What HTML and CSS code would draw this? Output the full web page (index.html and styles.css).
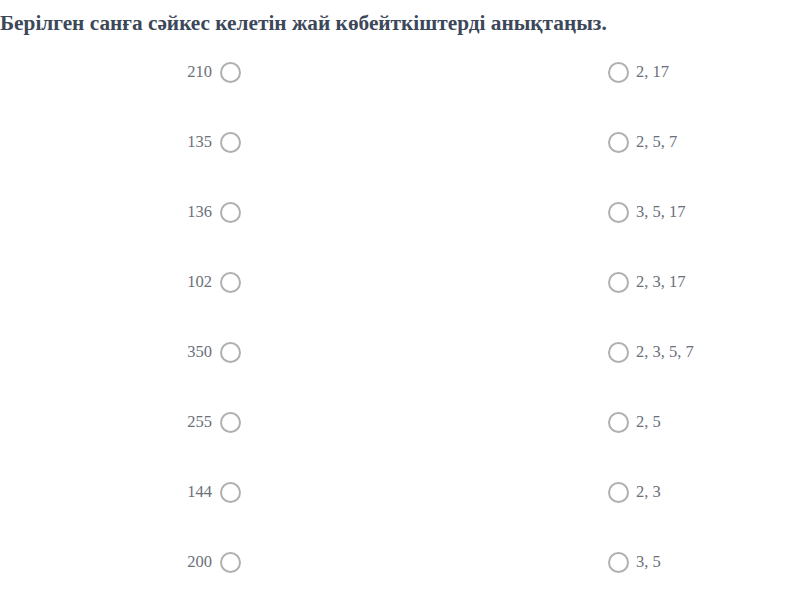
FILE: index.html
```html
<!DOCTYPE html>
<html lang="kk">
<head>
<meta charset="utf-8">
<link rel="stylesheet" href="styles.css">
</head>
<body>
<h1 class="title">Берілген санға сәйкес келетін жай көбейткіштерді анықтаңыз.</h1>
<div class="match">
  <div class="col col-left">
    <label class="item"><span class="txt">210</span><span class="radio"></span></label>
    <label class="item"><span class="txt">135</span><span class="radio"></span></label>
    <label class="item"><span class="txt">136</span><span class="radio"></span></label>
    <label class="item"><span class="txt">102</span><span class="radio"></span></label>
    <label class="item"><span class="txt">350</span><span class="radio"></span></label>
    <label class="item"><span class="txt">255</span><span class="radio"></span></label>
    <label class="item"><span class="txt">144</span><span class="radio"></span></label>
    <label class="item"><span class="txt">200</span><span class="radio"></span></label>
  </div>
  <div class="col col-right">
    <label class="item"><span class="radio"></span><span class="txt">2, 17</span></label>
    <label class="item"><span class="radio"></span><span class="txt">2, 5, 7</span></label>
    <label class="item"><span class="radio"></span><span class="txt">3, 5, 17</span></label>
    <label class="item"><span class="radio"></span><span class="txt">2, 3, 17</span></label>
    <label class="item"><span class="radio"></span><span class="txt">2, 3, 5, 7</span></label>
    <label class="item"><span class="radio"></span><span class="txt">2, 5</span></label>
    <label class="item"><span class="radio"></span><span class="txt">2, 3</span></label>
    <label class="item"><span class="radio"></span><span class="txt">3, 5</span></label>
  </div>
</div>
</body>
</html>
```
FILE: styles.css
```css
html, body {
  margin: 0;
  padding: 0;
  background: #ffffff;
}
body {
  font-family: "Liberation Serif", "Times New Roman", serif;
}
.title {
  margin: 0;
  padding: 10px 0 0 0;
  font-size: 21.3px;
  line-height: 26px;
  font-weight: bold;
  color: #3c4859;
}
.match {
  display: grid;
  grid-template-columns: 241px 367px 1fr;
  margin-top: 1px;
}
.col-left {
  grid-column: 1;
  display: flex;
  flex-direction: column;
  align-items: flex-end;
}
.col-right {
  grid-column: 3;
  display: flex;
  flex-direction: column;
  align-items: flex-start;
}
.item {
  height: 70px;
  display: flex;
  align-items: center;
  gap: 8px;
  font-size: 16.5px;
  color: #6a707a;
}
.col-right .item {
  gap: 7px;
}
.radio {
  width: 17px;
  height: 17px;
  border: 2px solid #b0b0b0;
  border-radius: 50%;
  box-sizing: content-box;
}
```
